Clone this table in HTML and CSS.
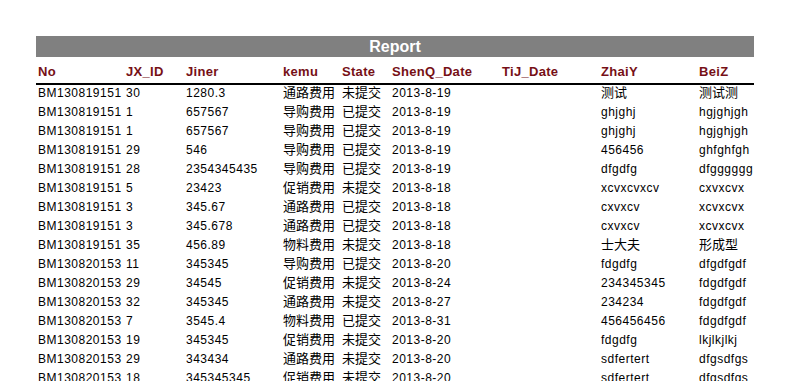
FILE: index.html
```html
<!DOCTYPE html>
<html>
<head>
<meta charset="utf-8">
<link rel="stylesheet" href="styles.css">
</head>
<body>
<div class="report">
  <div class="title">Report</div>
  <div class="row head">
    <div>No</div><div>JX_ID</div><div>Jiner</div><div>kemu</div><div>State</div><div>ShenQ_Date</div><div>TiJ_Date</div><div>ZhaiY</div><div>BeiZ</div>
  </div>
  <div class="body">
    <div class="row"><div>BM130819151</div><div>30</div><div>1280.3</div><div class="cjk">通路费用</div><div class="cjk">未提交</div><div>2013-8-19</div><div></div><div class="cjk">测试</div><div class="cjk">测试测</div></div>
    <div class="row"><div>BM130819151</div><div>1</div><div>657567</div><div class="cjk">导购费用</div><div class="cjk">已提交</div><div>2013-8-19</div><div></div><div>ghjghj</div><div>hgjghjgh</div></div>
    <div class="row"><div>BM130819151</div><div>1</div><div>657567</div><div class="cjk">导购费用</div><div class="cjk">已提交</div><div>2013-8-19</div><div></div><div>ghjghj</div><div>hgjghjgh</div></div>
    <div class="row"><div>BM130819151</div><div>29</div><div>546</div><div class="cjk">导购费用</div><div class="cjk">已提交</div><div>2013-8-19</div><div></div><div>456456</div><div>ghfghfgh</div></div>
    <div class="row"><div>BM130819151</div><div>28</div><div>2354345435</div><div class="cjk">导购费用</div><div class="cjk">已提交</div><div>2013-8-19</div><div></div><div>dfgdfg</div><div>dfgggggg</div></div>
    <div class="row"><div>BM130819151</div><div>5</div><div>23423</div><div class="cjk">促销费用</div><div class="cjk">未提交</div><div>2013-8-18</div><div></div><div>xcvxcvxcv</div><div>cxvxcvx</div></div>
    <div class="row"><div>BM130819151</div><div>3</div><div>345.67</div><div class="cjk">通路费用</div><div class="cjk">已提交</div><div>2013-8-18</div><div></div><div>cxvxcv</div><div>xcvxcvx</div></div>
    <div class="row"><div>BM130819151</div><div>3</div><div>345.678</div><div class="cjk">通路费用</div><div class="cjk">已提交</div><div>2013-8-18</div><div></div><div>cxvxcv</div><div>xcvxcvx</div></div>
    <div class="row"><div>BM130819151</div><div>35</div><div>456.89</div><div class="cjk">物料费用</div><div class="cjk">未提交</div><div>2013-8-18</div><div></div><div class="cjk">士大夫</div><div class="cjk">形成型</div></div>
    <div class="row"><div>BM130820153</div><div>11</div><div>345345</div><div class="cjk">导购费用</div><div class="cjk">已提交</div><div>2013-8-20</div><div></div><div>fdgdfg</div><div>dfgdfgdf</div></div>
    <div class="row"><div>BM130820153</div><div>29</div><div>34545</div><div class="cjk">促销费用</div><div class="cjk">未提交</div><div>2013-8-24</div><div></div><div>234345345</div><div>fdgdfgdf</div></div>
    <div class="row"><div>BM130820153</div><div>32</div><div>345345</div><div class="cjk">通路费用</div><div class="cjk">未提交</div><div>2013-8-27</div><div></div><div>234234</div><div>fdgdfgdf</div></div>
    <div class="row"><div>BM130820153</div><div>7</div><div>3545.4</div><div class="cjk">物料费用</div><div class="cjk">已提交</div><div>2013-8-31</div><div></div><div>456456456</div><div>fdgdfgdf</div></div>
    <div class="row"><div>BM130820153</div><div>19</div><div>345345</div><div class="cjk">促销费用</div><div class="cjk">未提交</div><div>2013-8-20</div><div></div><div>fdgdfg</div><div>lkjlkjlkj</div></div>
    <div class="row"><div>BM130820153</div><div>29</div><div>343434</div><div class="cjk">通路费用</div><div class="cjk">未提交</div><div>2013-8-20</div><div></div><div>sdfertert</div><div>dfgsdfgs</div></div>
    <div class="row"><div>BM130820153</div><div>18</div><div>345345345</div><div class="cjk">促销费用</div><div class="cjk">未提交</div><div>2013-8-20</div><div></div><div>sdfertert</div><div>dfgsdfgs</div></div>
  </div>
</div>
</body>
</html>
```

FILE: styles.css
```css
html, body {
  margin: 0;
  padding: 0;
  background: #ffffff;
}
body {
  font-family: "Liberation Sans", "Noto Sans CJK SC", sans-serif;
  color: #000;
}
.report {
  margin: 36px 0 0 36px;
  width: 718px;
}
.title {
  height: 21px;
  line-height: 21px;
  background: #808080;
  color: #ffffff;
  font-weight: bold;
  font-size: 16px;
  text-align: center;
}
.row {
  display: grid;
  grid-template-columns: 88px 60px 97px 59px 50px 110px 99px 98px 57px;
  height: 19px;
  padding: 1px 0 4px;
  box-sizing: border-box;
  font-size: 12px;
  line-height: 14px;
  letter-spacing: 0.5px;
}
.row > div {
  padding-left: 2px;
  white-space: nowrap;
  overflow: hidden;
}
.row > .cjk {
  font-size: 13px;
  letter-spacing: 0;
}
.row.head {
  height: 28px;
  padding: 8px 0 4px;
  font-size: 13px;
  font-weight: bold;
  letter-spacing: 0.3px;
  color: #761016;
  border-bottom: 2px solid #000;
}
.body .row:first-child {
  padding-top: 1px;
}
```
